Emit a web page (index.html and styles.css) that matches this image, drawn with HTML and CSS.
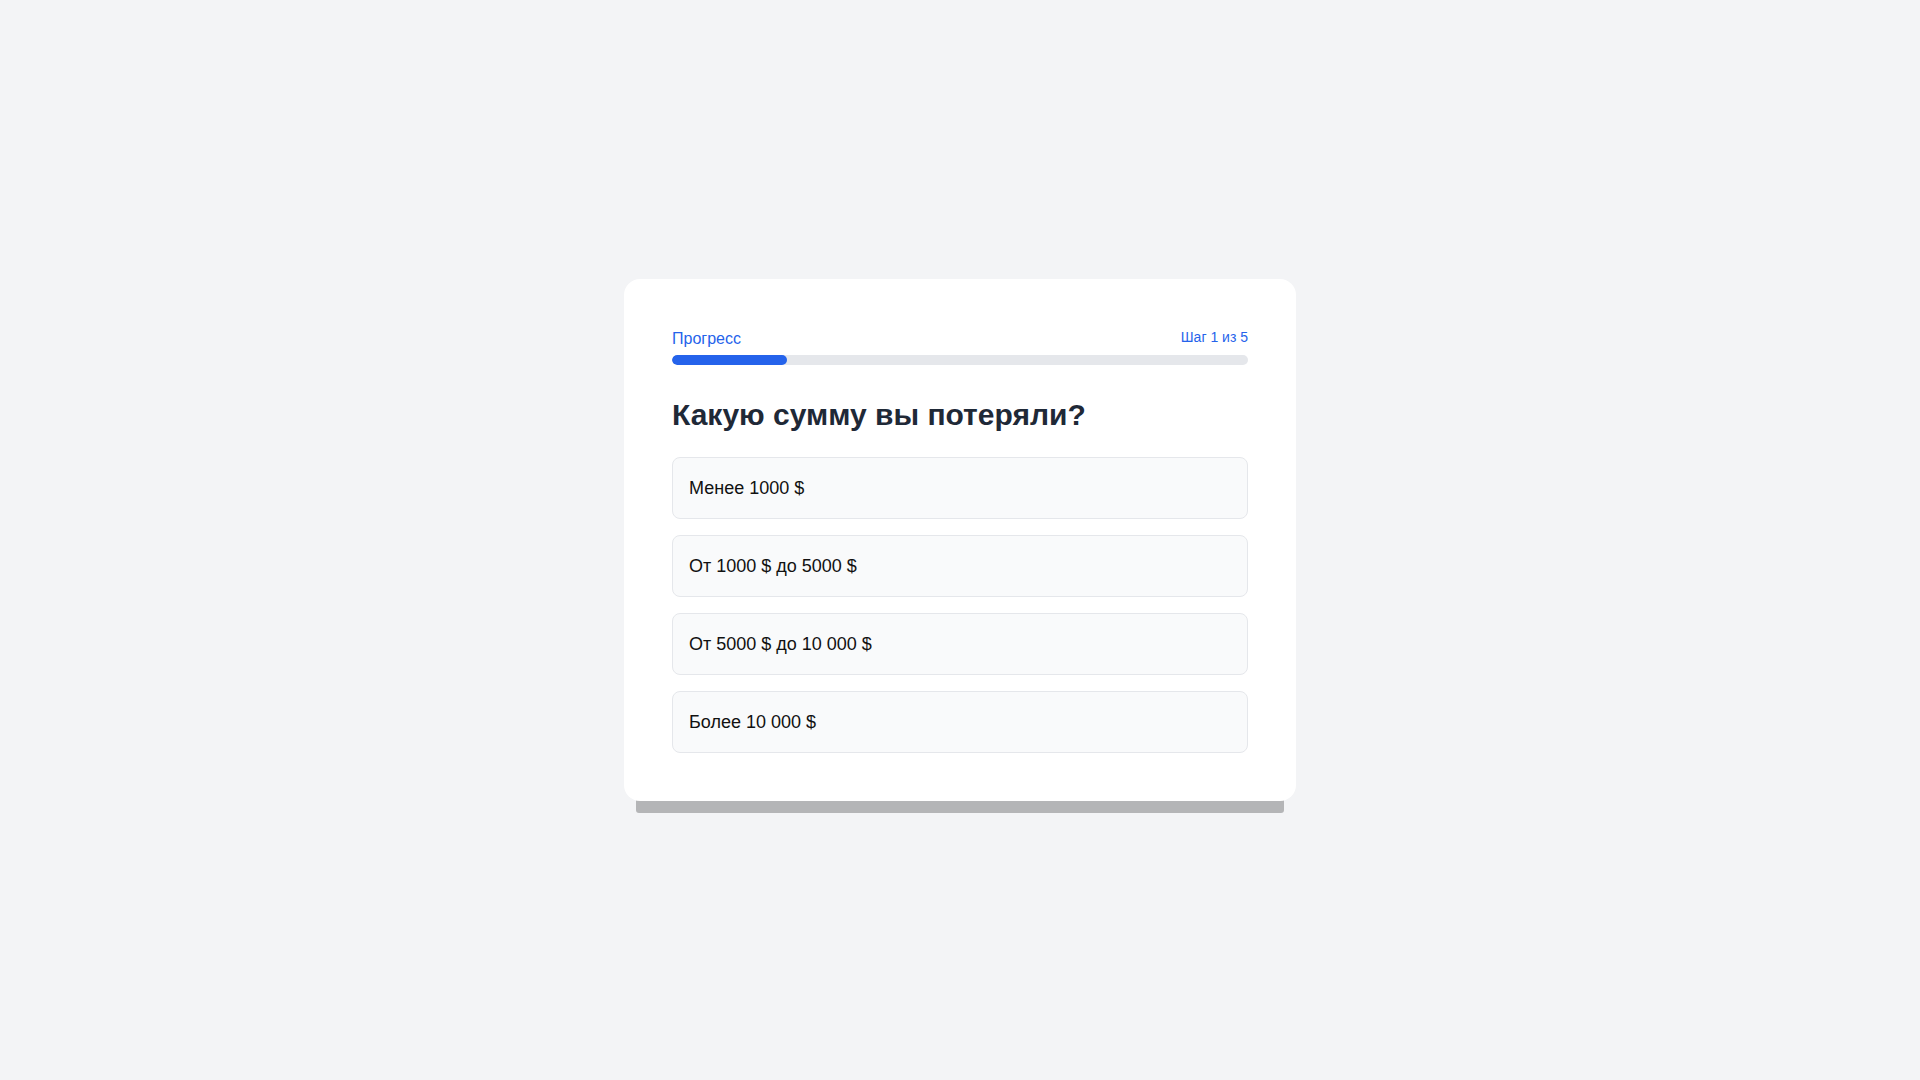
FILE: index.html
```html
<!DOCTYPE html>
<html lang="ru">
<head>
<meta charset="utf-8">
<title>Опрос</title>
<link rel="stylesheet" href="styles.css">
</head>
<body>
<main class="page">
  <section class="quiz">
    <div class="quiz-card">
      <div class="progress">
        <div class="progress-head">
          <span class="progress-label">Прогресс</span>
          <span class="progress-step">Шаг 1 из 5</span>
        </div>
        <div class="progress-track">
          <div class="progress-fill" style="width: 20%"></div>
        </div>
      </div>
      <h1 class="question">Какую сумму вы потеряли?</h1>
      <div class="options">
        <button class="option" type="button">Менее 1000 $</button>
        <button class="option" type="button">От 1000 $ до 5000 $</button>
        <button class="option" type="button">От 5000 $ до 10 000 $</button>
        <button class="option" type="button">Более 10 000 $</button>
      </div>
    </div>
    <div class="quiz-under"></div>
  </section>
</main>
</body>
</html>
```
FILE: styles.css
```css
* {
  box-sizing: border-box;
}

html, body {
  margin: 0;
  padding: 0;
}

body {
  background: #f3f4f6;
  font-family: "Liberation Sans", Arial, sans-serif;
  color: #111827;
}

.page {
  min-height: 100vh;
  display: flex;
  align-items: center;
  justify-content: center;
}

.quiz {
  position: relative;
  width: 672px;
}

.quiz-card {
  position: relative;
  z-index: 1;
  background: #ffffff;
  border-radius: 16px;
  padding: 48px;
}

/* stacked sheet peeking out below the card */
.quiz-under {
  position: absolute;
  left: 12px;
  right: 12px;
  top: 100%;
  height: 13px;
  margin-top: -1px;
  background: #b4b5b7;
  border-radius: 0 0 3px 3px;
}

.progress {
  margin-bottom: 32px;
}

.progress-head {
  display: flex;
  justify-content: space-between;
  margin-bottom: 4px;
}

.progress-label {
  font-size: 16px;
  line-height: 24px;
  color: #2563eb;
}

.progress-step {
  font-size: 14px;
  line-height: 20px;
  color: #2563eb;
}

.progress-track {
  height: 10px;
  background: #e5e7eb;
  border-radius: 9999px;
  overflow: hidden;
}

.progress-fill {
  height: 100%;
  background: #2563eb;
  border-radius: 9999px;
}

.question {
  margin: 0 0 24px;
  font-size: 30px;
  line-height: 36px;
  font-weight: 700;
  color: #1f2937;
}

.options {
  display: flex;
  flex-direction: column;
  gap: 16px;
}

.option {
  display: block;
  width: 100%;
  text-align: left;
  padding: 16px;
  background: #f9fafb;
  border: 1px solid #e5e7eb;
  border-radius: 8px;
  font-family: "Liberation Sans", Arial, sans-serif;
  font-size: 18px;
  line-height: 28px;
  color: #111111;
  cursor: pointer;
}
```
